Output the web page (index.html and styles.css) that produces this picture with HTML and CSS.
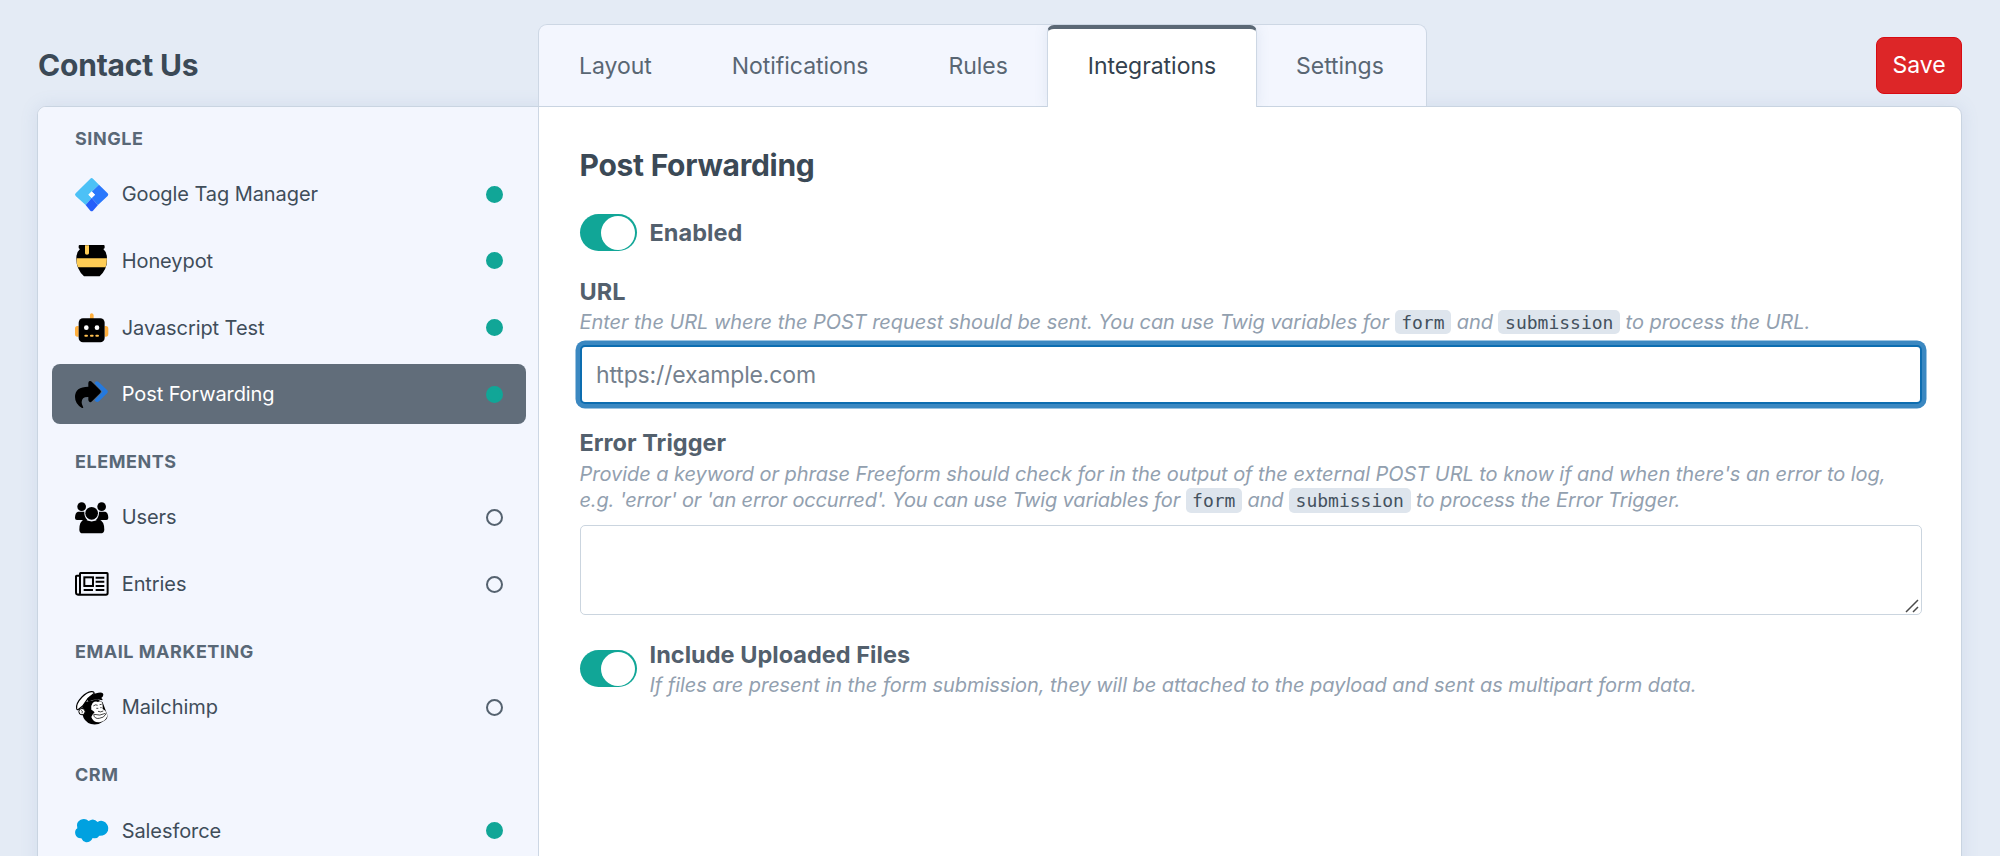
FILE: index.html
```html
<!DOCTYPE html>
<html lang="en">
<head>
<meta charset="utf-8">
<title>Contact Us</title>
<link rel="stylesheet" href="styles.css">
</head>
<body>
<div class="page">
  <header class="header">
    <h1 class="page-title">Contact Us</h1>
    <nav class="tabs">
      <a class="tab">Layout</a>
      <a class="tab">Notifications</a>
      <a class="tab">Rules</a>
      <a class="tab tab-active">Integrations</a>
      <a class="tab">Settings</a>
    </nav>
    <button class="save" type="button">Save</button>
  </header>

  <div class="panel">
    <aside class="sidebar">
      <section class="group">
        <h2 class="group-title">SINGLE</h2>
        <ul class="list">
          <li class="item">
            <svg class="icon" viewBox="0 0 100 100">
              <path fill="#4cc1f6" d="M46 2Q50-2 54 2L72 20 50 41 41 50 50 60 32 81 2 54Q-2 50 2 46Z"/>
              <path fill="#2a78fc" d="M72 20 98 46Q102 50 98 54L69 81 50 60 60 50 50 41Z"/>
              <path fill="#255efa" d="M50 60 69 81 54 98Q50 102 46 98L32 81Z"/>
              <path fill="#fff" d="M50 40 60 50 50 60 40 50Z"/>
            </svg>
            <span class="name">Google Tag Manager</span><i class="dot dot-on"></i>
          </li>
          <li class="item">
            <svg class="icon" viewBox="0 0 100 100">
              <path d="M14 3H86Q89 3 89 6V11Q89 14 85 15 96 24 96 43 98 74 74 97H27Q3 74 4 43 4 24 15 15 11 14 11 11V6Q11 3 14 3Z"/>
              <path fill="#ffcd55" d="M5 43H96Q96 58 92 70H9Q4 58 5 43ZM30 4H42V28Q42 32 36 32T30 28Z"/>
            </svg>
            <span class="name">Honeypot</span><i class="dot dot-on"></i>
          </li>
          <li class="item">
            <svg class="icon" viewBox="0 0 100 100">
              <path fill="#ffb03f" d="M45 12Q45 7 50 7T56 12V24H45ZM11 45V77H7Q0 77 0 69V53Q0 45 7 45ZM89 45V77H93Q100 77 100 69V53Q100 45 93 45Z"/>
              <rect x="11" y="22" width="78" height="72" rx="13"/>
              <circle cx="34" cy="50" r="7" fill="#fff"/><circle cx="66" cy="50" r="7" fill="#fff"/>
              <path stroke="#ffc04f" stroke-width="6" stroke-linecap="round" d="M31 74H36M48 74H53M64 74H69"/>
            </svg>
            <span class="name">Javascript Test</span><i class="dot dot-on"></i>
          </li>
          <li class="item item-active">
            <svg class="icon" viewBox="0 0 100 100">
              <path fill="#2579dd" d="M61 11Q66 8 71 12L97 37Q101 41 97 45L72 70Q67 74 61 70L59 66 82 41 59 16Z"/>
              <path d="M40 16Q40 10 44 9T51 12L76 37Q80 41 76 45L51 70Q47 74 44 72T40 66V57Q20 56 20 73 20 80 24 86 27 91 21 90 0 78 0 57 0 26 40 26Z"/>
            </svg>
            <span class="name">Post Forwarding</span><i class="dot dot-on"></i>
          </li>
        </ul>
      </section>
      <section class="group">
        <h2 class="group-title">ELEMENTS</h2>
        <ul class="list">
          <li class="item">
            <svg class="icon" viewBox="0 0 100 100">
              <circle cx="20" cy="17" r="13"/><circle cx="80" cy="17" r="13"/>
              <path d="M9 32H28Q27 47 37 57H6Q0 57 0 51 0 35 9 32ZM91 32H72Q73 47 63 57H94Q100 57 100 51 100 35 91 32Z"/>
              <circle cx="50" cy="37" r="19"/>
              <path d="M29 55Q50 68 71 55 88 60 88 86 88 97 76 97H24Q13 97 13 86 13 60 29 55Z"/>
            </svg>
            <span class="name">Users</span><i class="dot"></i>
          </li>
          <li class="item">
            <svg class="icon" viewBox="0 0 100 100">
              <g fill="none" stroke="#000" stroke-width="6">
                <path d="M15 26H5Q3 26 3 28V76Q3 83 9 83H93Q98 83 98 78V20Q98 18 96 18H17Q15 18 15 20V77Q15 83 9 83"/>
                <rect x="28" y="31" width="26" height="26"/>
                <path d="M62 32H88M62 44H88M62 57H88M62 69H88M26 69H54"/>
              </g>
            </svg>
            <span class="name">Entries</span><i class="dot"></i>
          </li>
        </ul>
      </section>
      <section class="group">
        <h2 class="group-title">EMAIL MARKETING</h2>
        <ul class="list">
          <li class="item">
            <svg class="icon" viewBox="9 13 100 100">
              <path d="M37 47 30 65 31 82Q36 106 57 112 78 117 96 103 109 95 106 84L92 47 76 38Z"/>
              <path fill="#fff" stroke="#000" stroke-width="3.5" d="M14 66Q11 51 30 31 44 17 58 15 66 14 67 20L48 35 32 58 18 69Q15 70 14 66Z"/>
              <path d="M45 38Q60 20 79 18 95 15 94 25 94 30 88 34 94 38 91 41 70 35 49 45Z"/>
              <circle cx="30" cy="75" r="9.5" fill="#fff" stroke="#000" stroke-width="3"/>
              <path fill="none" stroke="#000" stroke-width="2" d="M27 71Q34 73 30 80"/>
              <path fill="#fff" d="M62 49Q70 42 78 46 88 40 91 50 93 59 92 67 103 72 104 82 107 83 106 89 99 105 83 107 64 109 58 91 62 82 68 77 63 71 58 69 55 58 62 49Z"/>
              <path fill="none" stroke="#000" stroke-width="2.2" d="M64 58Q71 52 77 56M83 54 89 53M73 65H79M85 63H89M78 74Q86 78 94 73M65 83Q84 89 101 80M65 84Q68 98 82 95 96 94 102 82"/>
            </svg>
            <span class="name">Mailchimp</span><i class="dot"></i>
          </li>
        </ul>
      </section>
      <section class="group">
        <h2 class="group-title">CRM</h2>
        <ul class="list">
          <li class="item">
            <svg class="icon" viewBox="0 0 100 100">
              <path fill="#00a1e0" d="M41 21Q56 10 68 24 79 16 91 25 103 36 99 50 92 66 73 65 66 76 53 72 46 86 33 85 23 83 19 73 5 74 1 61-2 49 7 43 2 24 17 17 31 11 41 21Z"/>
            </svg>
            <span class="name">Salesforce</span><i class="dot dot-on"></i>
          </li>
        </ul>
      </section>
    </aside>

    <main class="content">
      <h2 class="content-title">Post Forwarding</h2>

      <div class="toggle-row enabled-row">
        <span class="toggle"></span>
        <span class="label">Enabled</span>
      </div>

      <div class="field url-field">
        <label class="label">URL</label>
        <p class="hint">Enter the URL where the POST request should be sent. You can use Twig variables for <code>form</code> and <code>submission</code> to process the URL.</p>
        <input class="input" type="text" placeholder="https://example.com">
      </div>

      <div class="field trigger-field">
        <label class="label">Error Trigger</label>
        <p class="hint">Provide a keyword or phrase Freeform should check for in the output of the external POST URL to know if and when there's an error to log,<br><span class="hint-tight">e.g. 'error' or 'an error occurred'. You can use Twig variables for <code>form</code> and <code>submission</code></span> to process the Error Trigger.</p>
        <div class="textarea-wrap">
          <textarea class="textarea"></textarea>
          <svg class="grip" viewBox="0 0 14 14"><path d="M1 13 13 1M8 13 13 8"/></svg>
        </div>
      </div>

      <div class="toggle-row files-row">
        <span class="toggle"></span>
        <div>
          <div class="label">Include Uploaded Files</div>
          <p class="hint">If files are present in the form submission, they will be attached to the payload and sent as multipart form data.</p>
        </div>
      </div>
    </main>
  </div>
</div>
</body>
</html>
```
FILE: styles.css
```css
* { box-sizing: border-box; }

body {
  margin: 0;
  height: 856px;
  overflow: hidden;
  background: #e4ebf5;
  color: #3f4d5a;
  font-family: Inter, "Liberation Sans", sans-serif;
}

h1, h2, p, ul { margin: 0; padding: 0; }

.page {
  display: flex;
  flex-direction: column;
  height: 856px;
  padding: 24px 38px 0 37px;
}

.header {
  display: flex;
  position: relative;
  z-index: 1;
  height: 82px;
}

.page-title {
  width: 501px;
  padding-left: 1px;
  line-height: 83px;
  font-size: 30px;
  font-weight: 700;
  letter-spacing: -.2px;
  color: #3b4956;
}

.tabs {
  display: flex;
  height: 82px;
  border: 1px solid #cdd7e4;
  border-bottom: 0;
  border-radius: 9px 9px 0 0;
  background: #f3f6fe;
}

.tab {
  padding: 0 40px;
  line-height: 83px;
  font-size: 23px;
  letter-spacing: -.04px;
  color: #596673;
}

.tab:last-child { padding-right: 42px; }

.tab-active {
  height: 82px;
  margin: 0 -1px;
  border: 1px solid #cdd7e4;
  border-top: 4px solid #5b6875;
  border-bottom: 0;
  border-radius: 7px 7px 0 0;
  background: #fff;
  color: #33414e;
  line-height: 75px;
  box-shadow: 0 0 14px rgba(96, 125, 159, .13);
  clip-path: inset(0 -14px 0 -14px);
}

.save {
  align-self: flex-start;
  width: 86px;
  height: 57px;
  margin: 12.5px 0 0 auto;
  padding: 0;
  border: 1px solid #d80b12;
  border-radius: 8px;
  background: #dd2628;
  color: #fff;
  font: 400 23px/54px Inter, sans-serif;
}

.panel {
  display: flex;
  flex: 1;
  min-height: 0;
  margin-bottom: -20px;
  border: 1px solid #c9d4e1;
  border-radius: 9px 9px 0 0;
  background: #fff;
  box-shadow: 0 0 18px rgba(96, 125, 180, .13);
}

.sidebar {
  width: 501px;
  padding: 22px 12px 0 14px;
  border-right: 1px solid #cdd7e4;
  border-radius: 8px 0 0 0;
  background: #f3f6fe;
  overflow: hidden;
}

.group + .group { margin-top: 28.1px; }

.group-title {
  margin: 0 0 15.2px 23px;
  line-height: 20px;
  font-size: 18px;
  font-weight: 700;
  letter-spacing: .53px;
  color: #596877;
}

.list {
  display: flex;
  flex-direction: column;
  gap: 6.67px;
  list-style: none;
}

.item {
  display: flex;
  align-items: center;
  height: 60px;
  padding: 0 23px;
  border-radius: 8px;
  color: #3f4d5a;
}

.item-active { background: #616d7a; color: #fff; }

.icon {
  width: 33.3px;
  height: 33.3px;
  overflow: visible;
}

.name {
  flex: 1;
  margin-left: 13.4px;
  font-size: 20px;
  letter-spacing: -.08px;
}

.dot {
  width: 17px;
  height: 17px;
  border: 2px solid #55626f;
  border-radius: 50%;
}

.dot-on { border-color: #11a697; background: #11a697; }

.content {
  flex: 1;
  padding: 40px 39px 0 40.5px;
}

.content-title {
  line-height: 36px;
  font-size: 30px;
  font-weight: 700;
  letter-spacing: -.27px;
  color: #3b4956;
}

.toggle-row {
  display: flex;
  align-items: center;
  gap: 13px;
}

.enabled-row { height: 37px; margin-top: 31px; }

.toggle {
  display: flex;
  justify-content: flex-end;
  width: 57px;
  height: 37px;
  padding: 1.5px;
  border-radius: 19px;
  background: #11a697;
}

.toggle::after {
  content: "";
  width: 34px;
  height: 34px;
  border-radius: 50%;
  background: #fff;
}

.label {
  display: block;
  line-height: 28px;
  font-size: 23.5px;
  font-weight: 700;
  letter-spacing: .03px;
  color: #53606d;
}

.url-field { margin-top: 26.5px; }
.trigger-field { margin-top: 24.5px; }

.hint {
  margin-top: 3px;
  line-height: 26.67px;
  font-size: 20px;
  font-style: italic;
  letter-spacing: -.05px;
  color: #92a0af;
  white-space: nowrap;
}

.trigger-field .hint { margin-top: 4px; }

.hint-tight { letter-spacing: -.145px; }

.hint code {
  padding: 2px 6.6px 1.5px;
  border-radius: 5px;
  background: #dee5ed;
  color: #44515e;
  font: normal 18px "DejaVu Sans Mono", monospace;
  letter-spacing: 0;
}

.input {
  display: block;
  width: 100%;
  height: 59px;
  margin-top: 10px;
  padding: 0 14.5px;
  border: 2px solid #0d6db0;
  border-radius: 5px;
  outline: 0;
  background: #fff;
  box-shadow: 0 0 0 4.5px #3b88c1;
  font: 400 23px Inter, sans-serif;
  letter-spacing: -.15px;
}

.input::placeholder { color: #74808d; opacity: 1; }

.textarea-wrap {
  position: relative;
  height: 90px;
  margin-top: 11px;
}

.textarea {
  display: block;
  width: 100%;
  height: 100%;
  border: 1px solid #cbd5df;
  border-radius: 5px;
  background: #fff;
  resize: none;
}

.grip {
  position: absolute;
  right: 3px;
  bottom: 2px;
  width: 14px;
  height: 14px;
  fill: none;
  stroke: #4a4a4a;
  stroke-width: 1.5;
}

.files-row { margin-top: 26px; }
.files-row .toggle { margin-bottom: 2px; }
```
